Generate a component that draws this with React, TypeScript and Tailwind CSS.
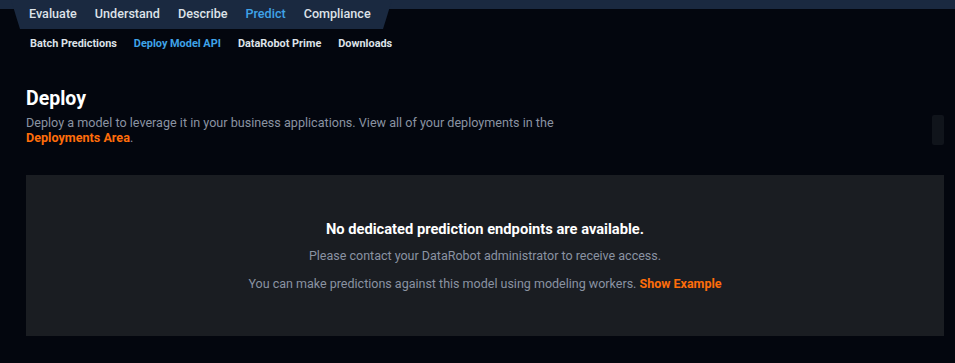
const tabs = ['Evaluate', 'Understand', 'Describe', 'Predict', 'Compliance']
const subTabs = ['Batch Predictions', 'Deploy Model API', 'DataRobot Prime', 'Downloads']

export default function App() {
  return (
    <div className="relative h-[363px] w-full overflow-hidden bg-[#03060e] font-['Roboto',sans-serif]">
      {/* top nav */}
      <div className="h-[29px] bg-[linear-gradient(to_bottom,#1a2940_9px,transparent_9px)]">
        <nav className="ml-[11px] flex h-[29px] w-[381px] items-center gap-[18px] bg-[#1a2940] pl-[18px] [clip-path:polygon(0_0,100%_0,calc(100%-9px)_100%,9px_100%)]">
          {tabs.map((t) => (
            <span
              key={t}
              className={`text-[12.6px] font-medium leading-none ${t === 'Predict' ? 'text-[#3fa3e8]' : 'text-[#dde2e8]'}`}
            >
              {t}
            </span>
          ))}
        </nav>
      </div>

      <div className="flex h-[29px] items-center gap-[17px] pl-[30px] pt-[1px]">
        {subTabs.map((t) => (
          <span
            key={t}
            className={`text-[10.9px] font-bold leading-none ${t === 'Deploy Model API' ? 'text-[#3fa3e8]' : 'text-[#dde2e8]'}`}
          >
            {t}
          </span>
        ))}
      </div>

      <div className="px-[26px] pr-[11px]">
        <h1 className="mt-[29px] text-[19.5px] font-bold leading-[24px] text-white">Deploy</h1>
        <p className="mt-[4px] text-[12.6px] leading-[15px] text-[#8a93a2]">
          Deploy a model to leverage it in your business applications. View all of your deployments in the
          <br />
          <span className="font-bold text-[#ff6d0a]">Deployments Area</span>.
        </p>

        <div className="mt-[30px] flex flex-col items-center bg-[#1a1d22] pb-[43px] pt-[44px]">
          <div className="text-[14.7px] font-bold leading-[20px] text-white">
            No dedicated prediction endpoints are available.
          </div>
          <div className="mt-[8px] text-[12.5px] leading-[18px] text-[#8a93a2]">
            Please contact your DataRobot administrator to receive access.
          </div>
          <div className="mt-[10px] text-[12.5px] leading-[18px] text-[#8a93a2]">
            You can make predictions against this model using modeling workers.{' '}
            <span className="font-bold text-[#ff6d0a]">Show Example</span>
          </div>
        </div>
      </div>

      {/* scroll thumb */}
      <div className="absolute left-[932px] top-[115px] h-[30px] w-[12px] rounded-[2px] bg-[#10141b]" />
    </div>
  )
}
